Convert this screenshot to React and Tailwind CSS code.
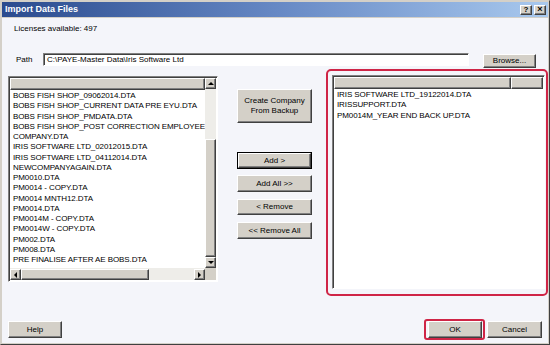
import React from "react";

const leftFiles = [
	"BOBS FISH SHOP_09062014.DTA",
	"BOBS FISH SHOP_CURRENT DATA PRE EYU.DTA",
	"BOBS FISH SHOP_PMDATA.DTA",
	"BOBS FISH SHOP_POST CORRECTION EMPLOYEE TEST.DTA",
	"COMPANY.DTA",
	"IRIS SOFTWARE LTD_02012015.DTA",
	"IRIS SOFTWARE LTD_04112014.DTA",
	"NEWCOMPANYAGAIN.DTA",
	"PM0010.DTA",
	"PM0014 - COPY.DTA",
	"PM0014 MNTH12.DTA",
	"PM0014.DTA",
	"PM0014M - COPY.DTA",
	"PM0014W - COPY.DTA",
	"PM002.DTA",
	"PM008.DTA",
	"PRE FINALISE AFTER AE BOBS.DTA",
];

const rightFiles = [
	"IRIS SOFTWARE LTD_19122014.DTA",
	"IRISSUPPORT.DTA",
	"PM0014M_YEAR END BACK UP.DTA",
];

const raised =
	"bg-[#d4d0c8] border border-t-white border-l-white border-r-[#404040] border-b-[#404040] shadow-[inset_-1px_-1px_0_#808080]";

function Btn({ className = "", children, isDefault }) {
	if (isDefault) {
		return (
			<div className={`border border-black ${className}`}>
				<div className={`${raised} w-full h-full flex items-center justify-center text-black`}>
					{children}
				</div>
			</div>
		);
	}
	return (
		<div className={`${raised} flex items-center justify-center text-black ${className}`}>
			{children}
		</div>
	);
}

function Arrow({ dir }) {
	const pts = {
		up: "1,5 4,2 7,5",
		down: "1,2 4,5 7,2",
		left: "5,1 2,4 5,7",
		right: "2,1 5,4 2,7",
	}[dir];
	return (
		<div className={`${raised} w-[11px] h-[11px] flex items-center justify-center shrink-0`}>
			<svg width="8" height="8" viewBox="0 0 8 8">
				<polygon points={pts} fill="#000" />
			</svg>
		</div>
	);
}

function Header({ split }) {
	return (
		<div className="flex h-[12px] shrink-0">
			<div className={`${raised} flex-1`} />
			{split && <div className={`${raised} w-[32px]`} />}
		</div>
	);
}

export default function App() {
	return (
		<div
			className="w-[550px] h-[345px] bg-[#d4d0c8] border-t border-l border-r border-b border-t-[#d4d0c8] border-l-[#d4d0c8] border-r-[#404040] border-b-[#404040] p-[1px] flex flex-col overflow-hidden text-[8px] text-black"
			style={{ fontFamily: '"Liberation Sans", Arial, sans-serif' }}
		>
			{/* title bar */}
			<div className="h-[15px] shrink-0 flex items-center justify-between pl-[3px] pr-[2px] bg-linear-to-r from-[#2b4b8e] via-[#6688c4] to-[#a9c9ee]">
				<span className="text-white font-bold text-[9px]">Import Data Files</span>
				<div className="flex gap-[2px]">
					<Btn className="w-[12px] h-[10px] text-[8px] font-bold leading-none">?</Btn>
					<Btn className="w-[12px] h-[10px] text-[9px] font-bold leading-none">×</Btn>
				</div>
			</div>

			{/* body */}
			<div className="flex-1 bg-[#f4f5fa] flex flex-col border-t border-[#d4d0c8]">
				<div className="ml-[12px] mt-[6px] h-[10px] leading-[10px]">Licenses available: 497</div>

				<div className="flex items-start mt-[19px] h-[15px]">
					<span className="ml-[14px] w-[27px] mt-[1px] leading-[12px]">Path</span>
					<div className="w-[426px] h-[13px] bg-white border border-t-[#808080] border-l-[#808080] border-r-white border-b-white shadow-[inset_1px_1px_0_#404040] pl-[3px] leading-[11px]">
						C:\PAYE-Master Data\Iris Software Ltd
					</div>
					<Btn className="ml-[14px] mt-[1px] w-[53px] h-[14px]">Browse...</Btn>
				</div>

				{/* main area */}
				<div className="flex items-start mt-[1px]">
					{/* left list */}
					<div className="ml-[6px] mt-[7px] w-[210px] h-[206px] bg-white border border-t-[#808080] border-l-[#808080] border-r-white border-b-white shadow-[inset_1px_1px_0_#404040] p-[1px] grid grid-cols-[1fr_11px] grid-rows-[1fr_12px]">
						<div className="flex flex-col overflow-hidden">
							<Header />
							<div className="pt-[1px] pl-[3px] overflow-hidden tracking-[-0.1px]">
								{leftFiles.map((f) => (
									<div key={f} className="h-[10.25px] leading-[10.25px] whitespace-nowrap">
										{f}
									</div>
								))}
							</div>
						</div>
						<div className="flex flex-col bg-[#eeede9]">
							<Arrow dir="up" />
							<div className="h-[50px]" />
							<div className={`${raised} flex-1`} />
							<Arrow dir="down" />
						</div>
						<div className="flex items-stretch bg-[#eeede9] pt-[1px]">
							<Arrow dir="left" />
							<div className={`${raised} w-[128px]`} />
							<div className="flex-1" />
							<Arrow dir="right" />
						</div>
						<div className="bg-[#d4d0c8]" />
					</div>

					{/* middle buttons */}
					<div className="ml-[19px] w-[75px] flex flex-col mt-[20px]">
						<Btn className="h-[34px] text-center leading-[10px]">
							Create Company
							<br />
							From Backup
						</Btn>
						<Btn isDefault className="mt-[29px] h-[17px]">Add &gt;</Btn>
						<Btn className="mt-[6px] h-[17px]">Add All &gt;&gt;</Btn>
						<Btn className="mt-[7px] h-[16px]">&lt; Remove</Btn>
						<Btn className="mt-[7px] h-[17px]">&lt;&lt; Remove All</Btn>
					</div>

					{/* right list with highlight */}
					<div className="ml-[14px] w-[222px] h-[227px] border-2 border-[#cf2546] rounded-[5px] pl-[4px] pt-[4px]">
						<div className="w-[213px] h-[214px] bg-white border border-t-[#808080] border-l-[#808080] border-r-white border-b-white shadow-[inset_1px_1px_0_#404040] p-[1px] flex flex-col">
							<Header split />
							<div className="pt-[1px] pl-[3px] tracking-[-0.1px]">
								{rightFiles.map((f) => (
									<div key={f} className="h-[10.25px] leading-[10.25px] whitespace-nowrap">
										{f}
									</div>
								))}
							</div>
						</div>
					</div>
				</div>

				{/* bottom buttons */}
				<div className="flex items-center mt-[23px]">
					<Btn className="ml-[6px] w-[54px] h-[17px]">Help</Btn>
					<div className="ml-[362px] w-[61px] h-[21px] border-2 border-[#cf2546] rounded-[3px] flex items-center pl-[2px]">
						<Btn className="w-[54px] h-[17px]">OK</Btn>
					</div>
					<Btn className="ml-[2px] w-[55px] h-[17px]">Cancel</Btn>
				</div>
			</div>
		</div>
	);
}
